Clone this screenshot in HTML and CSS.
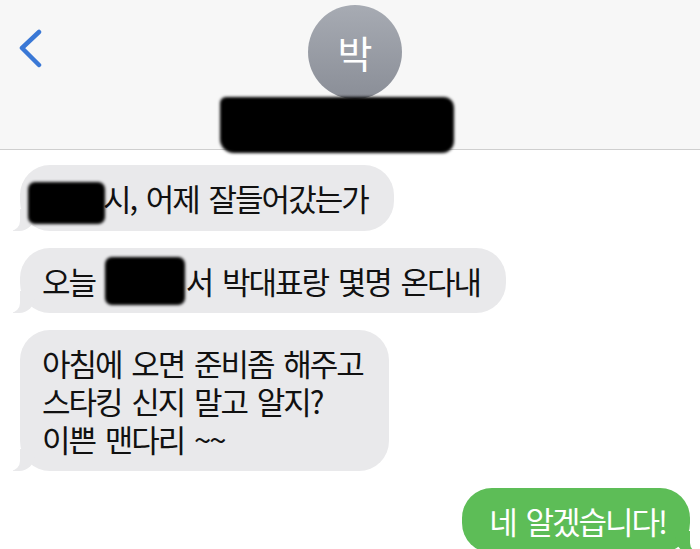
FILE: index.html
```html
<!DOCTYPE html>
<html lang="ko">

<head>
  <meta charset="UTF-8" />
  <title>메시지</title>
  <meta name="viewport" content="width=device-width, initial-scale=1.0" />
  <link rel="stylesheet" href="styles.css">
</head>

<body>
  <header class="top">
    <a class="back" href="#" aria-label="뒤로">
      <svg width="24" height="40" viewBox="0 0 24 40">
        <polyline points="20,3 3,19 20,36" fill="none" stroke="#3a78d6" stroke-width="4.5" stroke-linecap="round" stroke-linejoin="round" />
      </svg>
    </a>
    <div class="contact">
      <div class="avatar">박</div>
      <div class="name-mask"></div>
    </div>
  </header>

  <main class="thread">
    <div class="bubble in"><span class="mask m1"></span>시, 어제 잘들어갔는가</div>
    <div class="bubble in">오늘 <span class="mask m2"></span>서 박대표랑 몇명 온다내</div>
    <div class="bubble in">아침에 오면 준비좀 해주고<br>스타킹 신지 말고 알지?<br>이쁜 맨다리 ~~</div>
    <div class="bubble out">네 알겠습니다!</div>
  </main>
</body>

</html>
```

FILE: styles.css
```css
body {
  margin: 0;
  background: #fff;
  font-family: 'Noto Sans CJK KR', sans-serif;
  color: #111;
  overflow: hidden;
}

.top {
  display: grid;
  grid-template-columns: 1fr auto 1fr;
  height: 149px;
  background: #f7f7f7;
  border-bottom: 1px solid #cfcfcf;
}

.back {
  justify-self: start;
  margin: 29px 0 0 19px;
  height: 40px;
}

.contact {
  display: flex;
  flex-direction: column;
  align-items: center;
  padding-top: 5px;
  margin-left: 10px;
}

.avatar {
  width: 94px;
  height: 94px;
  border-radius: 50%;
  background: linear-gradient(#a7abb3, #8a8e97);
  color: #fff;
  font-size: 38px;
  line-height: 94px;
  text-align: center;
}

.name-mask {
  position: relative;
  z-index: 2;
  width: 234px;
  height: 56px;
  margin: -2px 0 0 -36px;
  background: #000;
  border-radius: 6px 10px 12px 14px;
  filter: blur(1.5px);
}

.thread {
  display: flex;
  flex-direction: column;
  align-items: flex-start;
  gap: 17px;
  padding: 15px 10px 0 20px;
}

.bubble {
  position: relative;
  padding: 14px 26px 13px 22px;
  border-radius: 30px;
  font-size: 31px;
  line-height: 38px;
  letter-spacing: -2px;
  word-spacing: 3px;
  white-space: nowrap;
}

.in {
  background: #e9e9eb;
}

.in::before {
  content: "";
  position: absolute;
  bottom: 0;
  left: -7px;
  width: 22px;
  height: 22px;
  background: #e9e9eb;
  border-bottom-right-radius: 16px;
}

.in::after {
  content: "";
  position: absolute;
  bottom: 0;
  left: -10px;
  width: 10px;
  height: 22px;
  background: #fff;
  border-bottom-right-radius: 10px;
}

.out {
  align-self: flex-end;
  padding: 14px 24px 13px 27px;
  background: #5dbd57;
  color: #fff;
}

.out::before {
  content: "";
  position: absolute;
  bottom: 0;
  right: -7px;
  width: 22px;
  height: 22px;
  background: #5dbd57;
  border-bottom-left-radius: 16px;
}

.out::after {
  content: "";
  position: absolute;
  bottom: 0;
  right: -10px;
  width: 10px;
  height: 22px;
  background: #fff;
  border-bottom-left-radius: 10px;
}

.mask {
  display: inline-block;
  background: #000;
  border-radius: 7px;
  filter: blur(1.5px);
}

.m1 {
  width: 77px;
  height: 42px;
  margin: -6px -2px -6px -14px;
  vertical-align: -7px;
}

.m2 {
  width: 80px;
  height: 48px;
  margin: -8px 1px -8px 0;
  vertical-align: -3px;
}
```
